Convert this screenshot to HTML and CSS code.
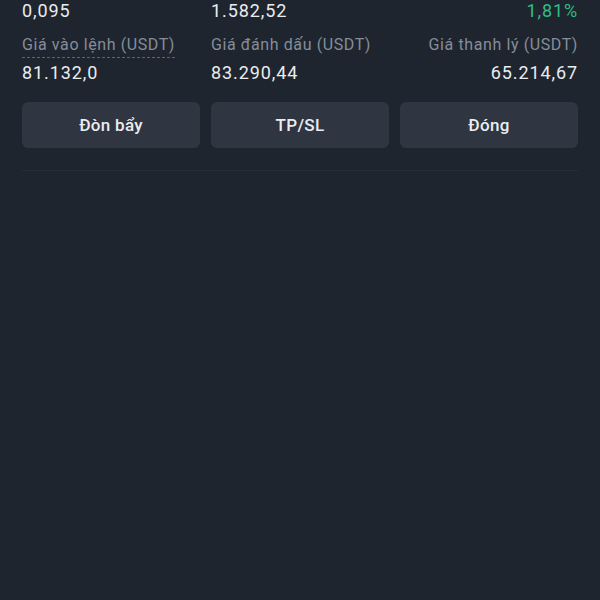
FILE: index.html
```html
<!DOCTYPE html>
<html lang="vi">
<head>
    <meta charset="UTF-8">
    <meta name="viewport" content="width=device-width, initial-scale=1.0">
    <title>Vị thế</title>
    <link rel="stylesheet" href="styles.css">
</head>
<body>
    <div class="position">
        <!-- Top row (scrolled partly out of view) -->
        <div class="grid top-row">
            <div class="value">0,095</div>
            <div class="value">1.582,52</div>
            <div class="value right green">1,81%</div>
        </div>

        <div class="grid info">
            <div class="label dotted">Giá vào lệnh (USDT)</div>
            <div class="label">Giá đánh dấu (USDT)</div>
            <div class="label right">Giá thanh lý (USDT)</div>
            <div class="value">81.132,0</div>
            <div class="value">83.290,44</div>
            <div class="value right">65.214,67</div>
        </div>

        <div class="grid actions">
            <button class="btn">Đòn bẩy</button>
            <button class="btn">TP/SL</button>
            <button class="btn">Đóng</button>
        </div>

        <div class="divider"></div>
    </div>
</body>
</html>
```

FILE: styles.css
```css
html, body {
    height: 100%;
}
body {
    margin: 0;
    background: #1f252e;
    font-family: Roboto, "Noto Sans", sans-serif;
    color: #eaecef;
}
.position {
    padding: 0 22px;
}
.grid {
    display: grid;
    grid-template-columns: 1fr 1fr 1fr;
    column-gap: 11px;
}
.top-row {
    margin-top: -2px;
    margin-bottom: 8px;
}
.info {
    row-gap: 2px;
}
.label {
    font-size: 16px;
    letter-spacing: 0.6px;
    line-height: 26px;
    color: #858d9a;
    justify-self: start;
}
.label.right,
.value.right {
    justify-self: end;
}
.dotted {
    border-bottom: 1px dashed #5c6470;
    line-height: 22px;
    margin-top: 2px;
}
.value {
    font-size: 18px;
    line-height: 26px;
    letter-spacing: 0.9px;
    justify-self: start;
}
.green {
    color: #2ebd85;
}
.actions {
    margin-top: 16px;
}
.btn {
    height: 46px;
    border: none;
    border-radius: 6px;
    background: #2f3541;
    color: #eaecef;
    font-family: inherit;
    font-size: 17px;
    font-weight: 500;
    letter-spacing: 0.3px;
}
.divider {
    margin-top: 22px;
    height: 1px;
    background: #272d37;
}
```
